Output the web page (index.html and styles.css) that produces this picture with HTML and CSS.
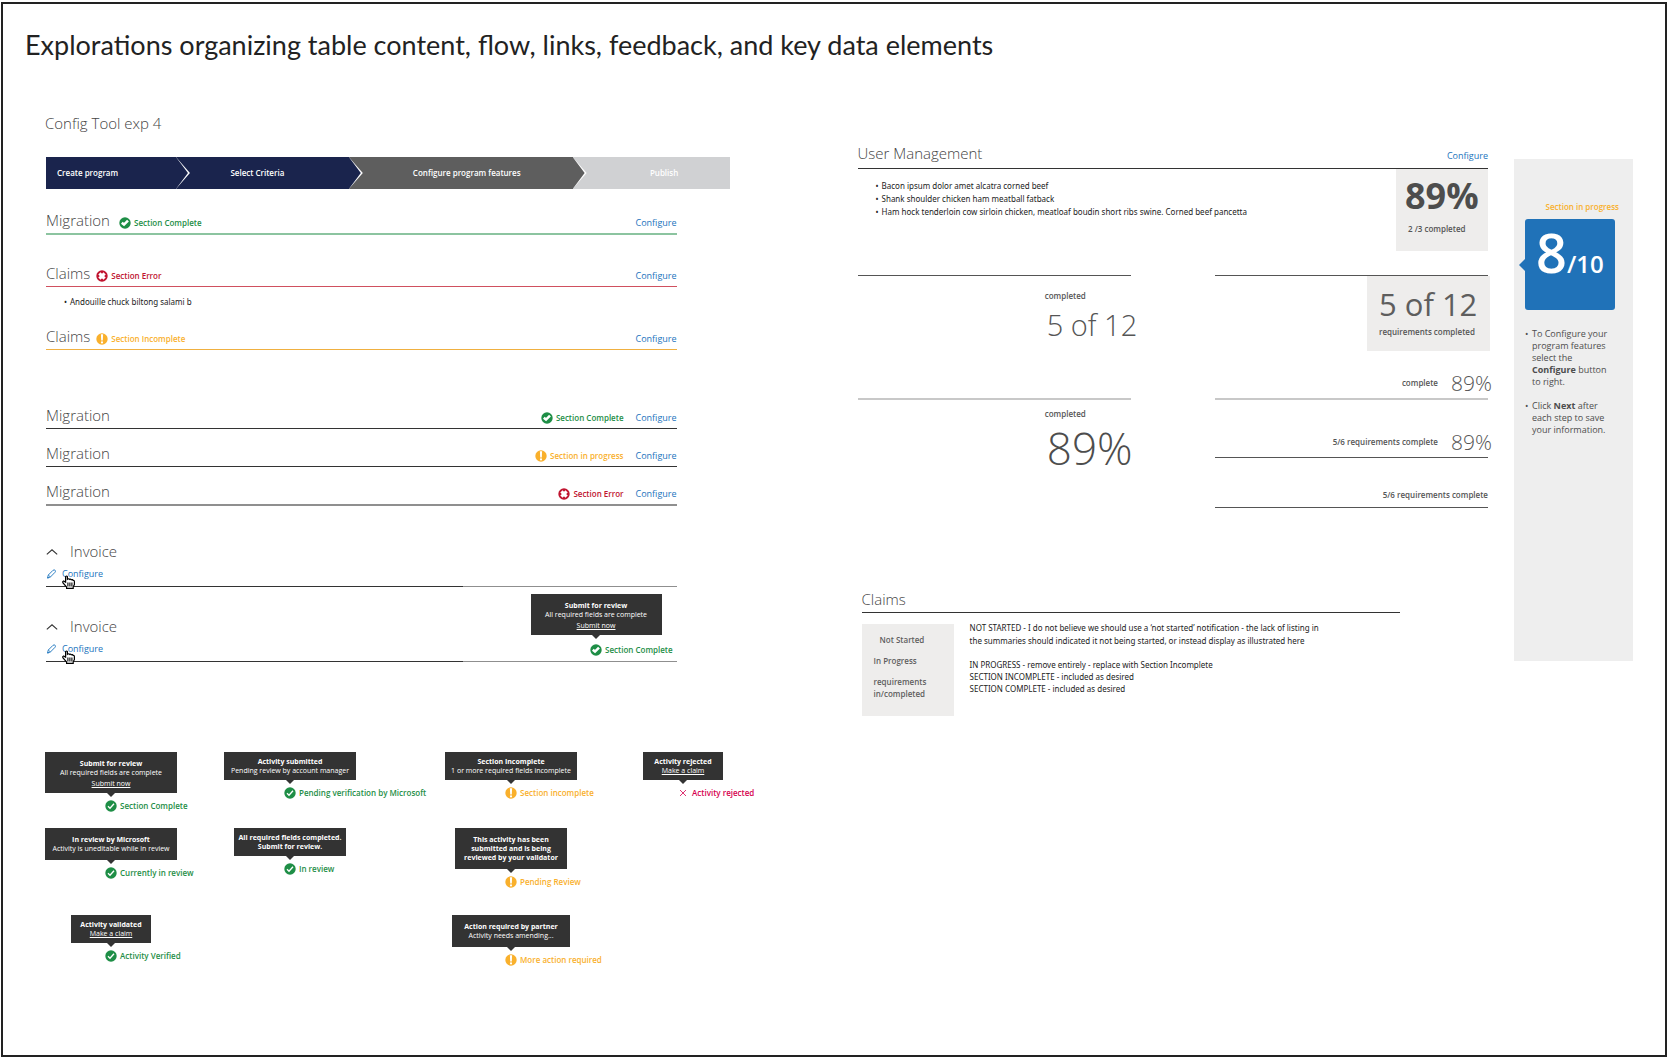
FILE: index.html
```html
<!DOCTYPE html>
<html lang="en">
<head>
    <meta charset="UTF-8">
    <meta name="viewport" content="width=device-width, initial-scale=1.0">
    <title>Config Tool Explorations</title>
    <link rel="stylesheet" href="styles.css">
</head>
<body>
    <!-- shared icons -->
    <svg class="sprite" aria-hidden="true">
        <symbol id="icon-check" viewBox="0 0 12 12">
            <circle cx="6" cy="6" r="5.7" fill="#1e8e46"/>
            <path d="M3 6.3L5 8.3L9 3.8" fill="none" stroke="#fff" stroke-width="1.3"/>
        </symbol>
        <symbol id="icon-check-bold" viewBox="0 0 12 12">
            <circle cx="6" cy="6" r="5.7" fill="#1e8e46"/>
            <path d="M2.8 5.8L5 7.6L9 3.6" fill="none" stroke="#fff" stroke-width="2.6"/>
        </symbol>
        <symbol id="icon-error" viewBox="0 0 12 12">
            <circle cx="6" cy="6" r="5.7" fill="#c0142f"/>
            <path d="M3.4 3.4L8.6 8.6M8.6 3.4L3.4 8.6" stroke="#fff" stroke-width="3.2"/>
        </symbol>
        <symbol id="icon-warn" viewBox="0 0 12 12">
            <circle cx="6" cy="6" r="5.7" fill="#f9b02c"/>
            <path d="M4.9 1.2H7.1L6.8 7.4H5.2Z" fill="#fff"/>
            <circle cx="6" cy="9.4" r="1.1" fill="#fff"/>
        </symbol>
        <symbol id="icon-x" viewBox="0 0 12 12">
            <path d="M3 3L9 9M9 3L3 9" stroke="#d6004f" stroke-width="0.8"/>
        </symbol>
        <symbol id="icon-up" viewBox="0 0 12 12">
            <path d="M0.8 8.4L6 3.8L11.2 8.4" fill="none" stroke="#333" stroke-width="1.1"/>
        </symbol>
        <symbol id="icon-pencil" viewBox="0 0 12 12">
            <path d="M1.5 10L2.3 7L7 2.3Q8.4 1.4 9.2 2.4Q9.8 3.4 9 4.3L4.4 9Z" fill="none" stroke="#1b74bd" stroke-width="0.9"/>
            <path d="M2.3 7L4.4 9M1.5 10L3 9.6" fill="none" stroke="#1b74bd" stroke-width="0.8"/>
        </symbol>
        <symbol id="icon-hand" viewBox="0 0 13 14">
            <path d="M3.6 1.6Q4.6 0.4 5.4 1.6V4.2Q6.6 3.2 7.4 4.4Q8.4 3.6 9.4 4.8Q10.6 4.2 11.2 5.4Q12.4 5.2 12.4 6.8V9.6L11.2 11.8V13.3H4.6V12L1 8Q0.2 6.4 1.6 6L3.6 7.2V2Z" fill="#fff" stroke="#000" stroke-width="1.2"/>
            <path d="M5.9 7.4V11.5M7.9 7.4V11.5M9.9 7.4V11.5" stroke="#000" stroke-width="1.1"/>
        </symbol>
    </svg>

    <div class="frame">
        <h1>Explorations organizing table content, flow, links, feedback, and key data elements</h1>

        <div class="columns">
            <main class="config">
                <h2>Config Tool exp 4</h2>

                <ol class="stepper">
                    <li class="step step-first">Create program</li>
                    <li class="step step-second">Select Criteria</li>
                    <li class="step step-current">Configure program features</li>
                    <li class="step step-last">Publish</li>
                </ol>

                <div class="sections">
                    <div class="section line-green">
                        <h2>Migration</h2>
                        <span class="status green wide"><svg class="icon"><use href="#icon-check-bold"/></svg>Section Complete</span>
                        <a href="#" class="configure">Configure</a>
                    </div>

                    <div class="section line-red">
                        <h2>Claims</h2>
                        <span class="status red"><svg class="icon"><use href="#icon-error"/></svg>Section Error</span>
                        <a href="#" class="configure">Configure</a>
                    </div>
                    <ul class="dash-list errors">
                        <li>Andouille chuck biltong salami b</li>
                    </ul>
                    <div class="section line-orange">
                        <h2>Claims</h2>
                        <span class="status orange"><svg class="icon"><use href="#icon-warn"/></svg>Section Incomplete</span>
                        <a href="#" class="configure">Configure</a>
                    </div>
                </div>

                <div class="sections sections-right">
                    <div class="section">
                        <h2>Migration</h2>
                        <span class="status green"><svg class="icon"><use href="#icon-check-bold"/></svg>Section Complete</span>
                        <a href="#" class="configure">Configure</a>
                    </div>
                    <div class="section">
                        <h2>Migration</h2>
                        <span class="status orange"><svg class="icon"><use href="#icon-warn"/></svg>Section in progress</span>
                        <a href="#" class="configure">Configure</a>
                    </div>
                    <div class="section line-gray">
                        <h2>Migration</h2>
                        <span class="status red"><svg class="icon"><use href="#icon-error"/></svg>Section Error</span>
                        <a href="#" class="configure">Configure</a>
                    </div>
                </div>

                <div class="invoices">
                    <div class="invoice">
                        <div class="invoice-title"><svg class="icon"><use href="#icon-up"/></svg><h2>Invoice</h2></div>
                        <a href="#" class="edit"><svg class="icon-pencil"><use href="#icon-pencil"/></svg>Configure</a>
                        <svg class="hand"><use href="#icon-hand"/></svg>
                    </div>
                    <div class="invoice">
                        <div class="invoice-title"><svg class="icon"><use href="#icon-up"/></svg><h2>Invoice</h2></div>
                        <a href="#" class="edit"><svg class="icon-pencil"><use href="#icon-pencil"/></svg>Configure</a>
                        <svg class="hand"><use href="#icon-hand"/></svg>
                        <div class="note invoice-note">
                            <div class="bubble tall"><b>Submit for review</b>All required fields are complete<a href="#" class="spaced">Submit now</a></div>
                            <span class="status green"><svg class="icon"><use href="#icon-check-bold"/></svg>Section Complete</span>
                        </div>
                    </div>
                </div>

                <div class="notes">
                    <div class="note">
                        <div class="bubble tall"><b>Submit for review</b>All required fields are complete<a href="#" class="spaced">Submit now</a></div>
                        <span class="status green"><svg class="icon"><use href="#icon-check"/></svg>Section Complete</span>
                    </div>
                    <div class="note">
                        <div class="bubble"><b>Activity submitted</b>Pending review by account manager</div>
                        <span class="status green"><svg class="icon"><use href="#icon-check"/></svg>Pending verification by Microsoft</span>
                    </div>
                    <div class="note">
                        <div class="bubble"><b>Section Incomplete</b>1 or more required fields incomplete</div>
                        <span class="status orange"><svg class="icon"><use href="#icon-warn"/></svg>Section incomplete</span>
                    </div>
                    <div class="note note-small">
                        <div class="bubble small"><b>Activity rejected</b><a href="#">Make a claim</a></div>
                        <span class="status pink"><svg class="icon"><use href="#icon-x"/></svg>Activity rejected</span>
                    </div>

                    <div class="note">
                        <div class="bubble tall"><b>In review by Microsoft</b>Activity is uneditable while in review</div>
                        <span class="status green"><svg class="icon"><use href="#icon-check"/></svg>Currently in review</span>
                    </div>
                    <div class="note">
                        <div class="bubble medium"><b>All required fields completed.<br>Submit for review.</b></div>
                        <span class="status green"><svg class="icon"><use href="#icon-check"/></svg>In review</span>
                    </div>
                    <div class="note">
                        <div class="bubble medium tall"><b>This activity has been<br>submitted and is being<br>reviewed by your validator</b></div>
                        <span class="status orange"><svg class="icon"><use href="#icon-warn"/></svg>Pending Review</span>
                    </div>

                    <div class="note row-start">
                        <div class="bubble small"><b>Activity validated</b><a href="#">Make a claim</a></div>
                        <span class="status green"><svg class="icon"><use href="#icon-check"/></svg>Activity Verified</span>
                    </div>
                    <div class="note third">
                        <div class="bubble large tall"><b>Action required by partner</b>Activity needs amending...</div>
                        <span class="status orange"><svg class="icon"><use href="#icon-warn"/></svg>More action required</span>
                    </div>
                </div>
            </main>

            <section class="management">
                <div class="section">
                    <h2>User Management</h2>
                    <a href="#" class="configure">Configure</a>
                </div>
                <div class="summary">
                    <ul class="dash-list">
                        <li>Bacon ipsum dolor amet alcatra corned beef</li>
                        <li>Shank shoulder chicken ham meatball fatback</li>
                        <li>Ham hock tenderloin cow sirloin chicken, meatloaf boudin short ribs swine. Corned beef pancetta</li>
                    </ul>
                    <div class="percent-box">
                        <div class="percent">89%</div>
                        <div class="caption">2 /3 completed</div>
                    </div>
                </div>

                <div class="stats">
                    <div class="stats-left">
                        <div class="stat">
                            <div class="stat-body">
                                <div class="caption">completed</div>
                                <div class="count-light">5 of 12</div>
                            </div>
                        </div>
                        <div class="stat stat-pale">
                            <div class="stat-body">
                                <div class="caption">completed</div>
                                <div class="percent-light">89%</div>
                            </div>
                        </div>
                    </div>
                    <div class="stats-right">
                        <div class="stat-line">
                            <div class="count-box">
                                <div class="count">5 of 12</div>
                                <div class="caption">requirements completed</div>
                            </div>
                        </div>
                        <div class="progress progress-pale"><span class="caption">complete</span><span class="progress-value">89%</span></div>
                        <div class="progress"><span class="caption">5/6 requirements complete</span><span class="progress-value">89%</span></div>
                        <div class="progress progress-last"><span class="caption">5/6 requirements complete</span></div>
                    </div>
                </div>

                <div class="claims">
                    <div class="section"><h2>Claims</h2></div>
                    <div class="claims-body">
                        <ul class="states">
                            <li class="state-first">Not Started</li>
                            <li>In Progress</li>
                            <li>requirements<br>in/completed</li>
                        </ul>
                        <div class="claims-text">
                            <p class="intro">NOT STARTED - I do not believe we should use a ‘not started’ notification - the lack of listing in<br>the summaries should indicated it not being started, or instead display as illustrated here</p>
                            <p>IN PROGRESS - remove entirely - replace with Section Incomplete<br>SECTION INCOMPLETE - included as desired<br>SECTION COMPLETE - included as desired</p>
                        </div>
                    </div>
                </div>
            </section>

            <aside class="sidebar">
                <div class="side-status">Section in progress</div>
                <div class="score"><span class="score-value">8</span>/10</div>
                <ul class="tips">
                    <li>To Configure your program features select the <b>Configure</b> button to right.</li>
                    <li>Click <b>Next</b> after each step to save your information.</li>
                </ul>
            </aside>
        </div>
    </div>
</body>
</html>
```
FILE: styles.css
```css
* {
    box-sizing: border-box;
}

body {
    margin: 0;
    padding: 2px 1px 3px 1px;
    background-color: #fff;
    color: #222;
    font-family: "Open Sans", "Noto Sans", sans-serif;
    font-size: 8px;
}

h1, h2, p, ul, ol {
    margin: 0;
    padding: 0;
}

ul, ol {
    list-style: none;
}

a {
    color: #1b74bd;
    text-decoration: none;
}

a:hover {
    text-decoration: underline;
}

.sprite {
    position: absolute;
    width: 0;
    height: 0;
}

.frame {
    min-height: calc(100vh - 5px);
    padding: 23px 32px 24px 22px;
    border: 2px solid #222;
}

h1 {
    font-family: Lato, sans-serif;
    font-size: 27px;
    font-weight: 400;
    line-height: 36px;
}

h2 {
    padding-bottom: 2px;
    color: #444;
    font-size: 15px;
    font-weight: 300;
    line-height: 22px;
}

.columns {
    display: grid;
    grid-template-columns: 786fr 630fr 119px;
    column-gap: 26px;
    padding: 49px 0 0 20px;
}

.config {
    padding-right: 102px;
}

/* stepper */
.stepper {
    display: grid;
    grid-template-columns: 130fr 173fr 224fr 157fr;
    margin: 21px 0 20px 1px;
    line-height: 32px;
    font-weight: 600;
    text-align: center;
    color: #fff;
}

.step {
    position: relative;
    height: 32px;
    background-color: #1a244d;
}

.step::before,
.step::after {
    content: "";
    position: absolute;
    top: 0;
    left: 100%;
    z-index: 1;
    width: 12px;
    height: 100%;
    background-color: inherit;
    clip-path: polygon(0 0, 100% 50%, 0 100%);
}

.step::before {
    width: 14px;
    background-color: #fff;
}

.step-first {
    padding-left: 11px;
    text-align: left;
}

.step-second {
    padding-right: 10px;
}

.step-current {
    padding-left: 12px;
    background-color: #5e5e5e;
}

.step-last {
    padding-left: 26px;
    background-color: #d0d1d3;
}

.step-last::before,
.step-last::after {
    display: none;
}

/* section rows */
.sections,
.invoices {
    margin: 0 53px 54px 1px;
}

.section {
    display: flex;
    align-items: flex-end;
    border-bottom: 1px solid #333;
}

.configure {
    margin-left: auto;
    font-size: 9px;
    line-height: 20px;
}

.status {
    display: flex;
    align-items: center;
    gap: 3px;
    font-weight: 600;
    line-height: 12px;
    white-space: nowrap;
}

.icon {
    flex: none;
    width: 12px;
    height: 12px;
}

.section .status {
    margin-left: 6px;
    line-height: 20px;
}

.section .wide {
    margin-left: 9px;
}

.green {
    color: #1e8e46;
}

.red {
    color: #c0142f;
}

.orange {
    color: #f9b02c;
}

.pink {
    color: #d6004f;
}

.line-green {
    margin-bottom: 27px;
    border-bottom: 2px solid #8cc4a0;
}

.line-red {
    border-color: #d0505f;
}

.line-orange {
    border-color: #f0b040;
}

.line-gray {
    border-bottom: 2px solid #8f8f8f;
}

.dash-list,
.claims-text {
    color: #222;
    font-family: "Noto Sans", sans-serif;
    line-height: 13px;
}

.dash-list li::before {
    content: "•";
    display: inline-block;
    width: 6px;
}

.errors {
    padding: 8px 0 17px 18px;
}

.sections-right {
    display: flex;
    flex-direction: column;
    gap: 13px;
    margin-bottom: 34px;
}

.sections-right .status {
    margin-left: auto;
}

.sections-right .configure {
    margin-left: 12px;
}

/* invoices */
.invoices {
    margin-bottom: 90px;
}

.invoice {
    position: relative;
    height: 47px;
    margin-bottom: 28px;
    border-bottom: 1px solid #333;
    border-image: linear-gradient(to right, #333 66%, #8f8f8f 66%) 1;
}

.invoice-title {
    display: flex;
    align-items: center;
    gap: 12px;
}

.edit {
    display: inline-flex;
    align-items: center;
    gap: 4px;
    line-height: 20px;
    font-size: 9px;
}

.icon-pencil {
    width: 12px;
    height: 12px;
}

.hand {
    position: absolute;
    left: 16px;
    top: 35px;
    width: 13px;
    height: 14px;
}

.invoice-note {
    position: absolute;
    right: 15px;
    bottom: 5px;
    width: 131px;
}

.invoice-note .bubble {
    margin-bottom: 9px;
}

/* notes with a bubble above the status */
.notes {
    display: grid;
    grid-template-columns: 179px 221px 198px 80px;
    grid-template-rows: 76px 87px auto;
}

.notes .note {
    width: 132px;
}

.notes .note-small {
    width: 80px;
}

.bubble {
    position: relative;
    margin: 0 auto 7px;
    padding: 5px 0;
    background-color: #333;
    color: #fff;
    font-size: 7px;
    line-height: 9px;
    text-align: center;
    white-space: nowrap;
}

.bubble::after {
    content: "";
    position: absolute;
    top: 100%;
    left: 50%;
    margin-left: -4px;
    border: 4px solid transparent;
    border-top-color: #333;
    border-bottom: 0;
}

.bubble b,
.bubble a {
    display: block;
    color: #fff;
}

.bubble a {
    text-decoration: underline;
}

.bubble .spaced {
    margin: 2px 0 -2px;
}

.tall {
    padding: 7px 0;
}

.large {
    width: 118px;
}

.medium {
    width: 112px;
}

.small {
    width: 80px;
}

.note .status {
    margin-left: calc(50% - 6px);
}

.row-start {
    grid-column: 1;
}

.third {
    grid-column: 3;
}

/* user management */
.management {
    padding-top: 30px;
}

.management .section {
    padding-bottom: 2px;
}

.summary {
    display: flex;
    justify-content: space-between;
    padding-left: 18px;
}

.summary .dash-list {
    padding-top: 10px;
}

.percent-box,
.count-box,
.states {
    background-color: #eeedec;
}

.caption {
    color: #555;
    font-weight: 600;
    line-height: 12px;
    white-space: nowrap;
}

.percent-box {
    width: 92px;
    height: 82px;
    padding-left: 9px;
}

.percent-box .caption {
    padding-left: 3px;
}

.percent {
    color: #4d4d4d;
    font-size: 36px;
    font-weight: 700;
    line-height: 54px;
}

.stats {
    display: grid;
    grid-template-columns: 273fr 273fr;
    column-gap: 84px;
    margin-top: 24px;
}

.stat {
    height: 123px;
    border-top: 1px solid #555;
}

.stat-pale {
    border-top: 2px solid #c8c8c8;
}

.stat-body {
    width: 86px;
    margin-left: auto;
    padding-top: 14px;
    white-space: nowrap;
}

.stat-pale .stat-body {
    padding-top: 8px;
}

.count-light {
    padding-left: 2px;
    color: #555;
    font-size: 29px;
    font-weight: 300;
    line-height: 46px;
}

.percent-light {
    padding-left: 2px;
    color: #4d4d4d;
    font-size: 44px;
    font-weight: 300;
    line-height: 56px;
}

.stat-line {
    height: 95px;
    border-top: 1px solid #555;
}

.count-box {
    width: 123px;
    height: 75px;
    margin: 0 -2px 0 auto;
    padding: 7px 12px;
}

.count {
    color: #5e5e5e;
    font-size: 31px;
    line-height: 43px;
    white-space: nowrap;
}

.progress {
    display: flex;
    align-items: center;
    justify-content: flex-end;
    height: 29px;
    margin-bottom: 31px;
    padding-bottom: 2px;
    border-bottom: 1px solid #555;
}

.progress-pale {
    height: 30px;
    margin-bottom: 29px;
    border-bottom: 2px solid #c8c8c8;
}

.progress-value {
    width: 41px;
    margin: 0 -4px 0 13px;
    color: #555;
    font-size: 21px;
    font-weight: 300;
    line-height: 24px;
}

.progress-last {
    height: 19px;
    margin-bottom: 0;
    padding-bottom: 6px;
}

/* claims notes */
.claims {
    margin: 67px 0 0 4px;
}

.claims .section {
    width: 86%;
    padding: 0;
}

.claims-body {
    display: flex;
    gap: 16px;
    margin-top: 11px;
}

.states {
    width: 92px;
    height: 92px;
    padding: 10px 12px;
    color: #5e5e5e;
    font-weight: 600;
    line-height: 12px;
}

.states li {
    margin-bottom: 9px;
}

.states .state-first {
    padding-left: 6px;
}

.claims-text {
    margin-top: -3px;
    line-height: 12px;
    white-space: nowrap;
}

.claims-text .intro {
    margin-bottom: 12px;
    line-height: 13px;
}

/* sidebar */
.sidebar {
    height: 502px;
    margin-top: 47px;
    padding: 42px 14px 0 11px;
    background-color: #eee;
}

.side-status {
    color: #f9b02c;
    font-weight: 600;
    line-height: 12px;
    text-align: right;
}

.score {
    position: relative;
    width: 90px;
    height: 91px;
    margin-top: 6px;
    padding-left: 11px;
    border-radius: 3px;
    background-color: #2072b8;
    color: #fff;
    font-size: 24px;
    font-weight: 600;
    line-height: 66px;
    white-space: nowrap;
}

.score::before {
    content: "";
    position: absolute;
    left: -6px;
    top: 40px;
    border: 6px solid transparent;
    border-right-color: #2072b8;
    border-left: 0;
}

.score-value {
    font-size: 54px;
}

.tips {
    padding: 18px 8px 0 7px;
    color: #4d4d4d;
    font-size: 9px;
    line-height: 12px;
}

.tips li {
    position: relative;
    margin-bottom: 12px;
}

.tips li::before {
    content: "•";
    position: absolute;
    left: -7px;
}
```
